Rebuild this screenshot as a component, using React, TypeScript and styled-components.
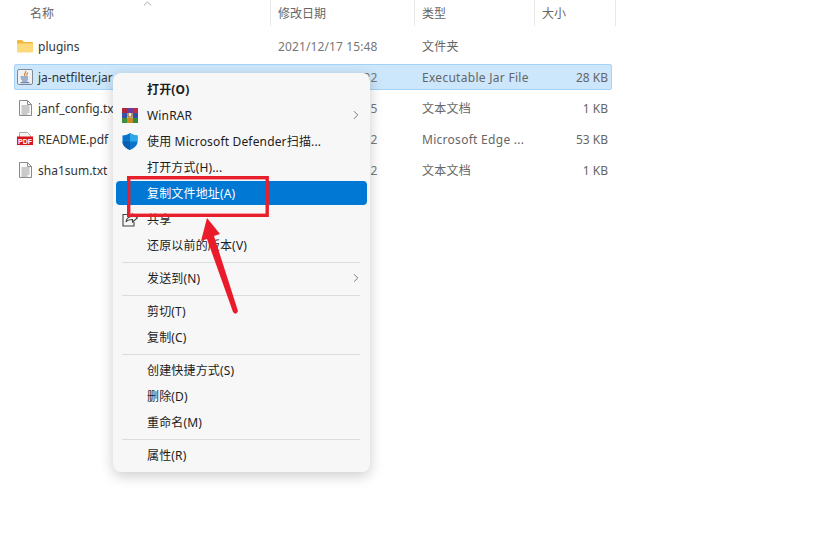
import styled, { createGlobalStyle } from "styled-components";
import { ChevronRight, ChevronUp } from "lucide-react";

const GlobalStyle = createGlobalStyle`
  html, body {
    margin: 0;
    padding: 0;
    background: #fff;
    font-family: "Noto Sans", "Noto Sans CJK SC", sans-serif;
    font-size: 12px;
  }
`;

const Page = styled.div`
  position: relative;
  width: 813px;
  height: 542px;
  overflow: hidden;
  background: #fff;
`;

const Explorer = styled.div`
  display: flex;
  flex-direction: column;
  width: 616px;
`;

const Header = styled.div`
  position: relative;
  display: grid;
  grid-template-columns: 257px 144px 120px 81px;
  height: 26px;
  padding-left: 14px;
  margin-bottom: 7px;
`;

const SortCaret = styled.span`
  position: absolute;
  left: 141px;
  top: -3px;
  color: #777;
  line-height: 0;
`;

const HeaderCell = styled.div<{ $pad: number }>`
  display: flex;
  align-items: center;
  padding-left: ${(p) => p.$pad}px;
  color: #666;
  border-right: 1px solid #e8e8e8;
`;

const Rows = styled.div`
  display: flex;
  flex-direction: column;
  gap: 5px;
`;

const Row = styled.div<{ $selected?: boolean }>`
  display: grid;
  grid-template-columns: 256px 144px 120px 73px;
  align-items: center;
  box-sizing: border-box;
  width: 598px;
  height: 26px;
  margin-left: 14px;
  border: 1px solid ${(p) => (p.$selected ? "#a5d3f7" : "transparent")};
  background: ${(p) => (p.$selected ? "#cce6fb" : "transparent")};
  border-radius: 2px;
`;

const NameCell = styled.div`
  display: flex;
  align-items: center;
  gap: 5px;
  padding-left: 2px;
  color: #333;
  white-space: nowrap;
`;

const FileIcon = styled.span`
  display: flex;
  justify-content: center;
  width: 16px;
  flex: none;
`;

const DateCell = styled.div`
  padding-left: 7px;
  color: #777;
  letter-spacing: 0.12px;
`;

const TypeCell = styled.div`
  padding-left: 7px;
  color: #666;
  white-space: nowrap;
  letter-spacing: 0.28px;
`;

const SizeCell = styled.div`
  text-align: right;
  color: #666;
`;

const Menu = styled.div`
  position: absolute;
  left: 113px;
  top: 73px;
  display: flex;
  flex-direction: column;
  box-sizing: border-box;
  width: 257px;
  height: 399px;
  padding-top: 3px;
  background: #f7f7f7;
  border-radius: 8px;
  box-shadow: 0 4px 14px rgba(0, 0, 0, 0.2);
`;

const Item = styled.div<{ $active?: boolean; $bold?: boolean }>`
  display: flex;
  align-items: center;
  height: 24px;
  flex: none;
  margin: 1px 3px;
  padding: 0 6px;
  border-radius: 4px;
  color: ${(p) => (p.$active ? "#fff" : "#1c1c1c")};
  background: ${(p) => (p.$active ? "#0078d4" : "transparent")};
  font-weight: ${(p) => (p.$bold ? 700 : 400)};
  letter-spacing: 0.16px;
`;

const IconSlot = styled.span`
  display: flex;
  align-items: center;
  justify-content: flex-start;
  width: 25px;
  flex: none;
`;

const Arrow = styled.span`
  display: flex;
  margin-left: auto;
  margin-right: -2px;
  color: #444;
`;

const Separator = styled.div`
  height: 1px;
  flex: none;
  margin: 4px 10px 2px 9px;
  background: #dcdcdc;
`;

const Annotation = styled.svg`
  position: absolute;
  left: 0;
  top: 0;
  pointer-events: none;
`;

const Folder = () => (
  <svg width="16" height="14" viewBox="0 0 16 14">
    <path d="M0 2 a1 1 0 0 1 1-1 h4 l2 2 h8 a1 1 0 0 1 1 1 v2 H0z" fill="#f0b93a" />
    <path d="M0 4.5 h16 v8 a1 1 0 0 1-1 1 H1 a1 1 0 0 1-1-1z" fill="#fcd97c" />
  </svg>
);

const JarFile = () => (
  <svg width="16" height="16" viewBox="0 0 16 16">
    <rect x="0.5" y="0.5" width="15" height="15" rx="1.5" fill="#f1f1f1" stroke="#7d8a99" />
    <path d="M8.5 2 c1.5 1.5-2.5 2.5-.5 5 M10.5 3.5 c.5 1-1.5 1.5-.5 3" fill="none" stroke="#d9762b" strokeWidth="1.1" />
    <path d="M3.5 8 h7.5 M4 10 h7 M5 12 h5.5 M3.5 13.8 h9" stroke="#4a6fa5" strokeWidth="1.1" />
  </svg>
);

const TextFile = () => (
  <svg width="13" height="16" viewBox="0 0 13 16">
    <path d="M0.5 0.5 h8 l4 4 v11 h-12z" fill="#fafafa" stroke="#8a8a8a" />
    <path d="M8.5 0.5 v4 h4" fill="none" stroke="#8a8a8a" />
    <path d="M2.5 6 h8 M2.5 8 h8 M2.5 10 h8 M2.5 12 h8 M2.5 14 h6" stroke="#9a9a9a" />
  </svg>
);

const PdfFile = () => (
  <svg width="16" height="15" viewBox="0 0 16 15">
    <path d="M2.5 0.5 h8 l3 3 v3 h-11z" fill="#f5f5f5" stroke="#aaa" />
    <rect x="0" y="4.5" width="16" height="8.5" fill="#d9141b" />
    <rect x="2.5" y="13" width="11" height="2" fill="#eee" />
    <text x="8" y="11.5" textAnchor="middle" fontSize="7" fontWeight="700" fontFamily="Liberation Sans, sans-serif" fill="#fff">
      PDF
    </text>
  </svg>
);

const WinRar = () => (
  <svg width="16" height="15" viewBox="0 0 16 15">
    <rect x="0" y="0" width="5" height="5" fill="#b0263c" />
    <rect x="5" y="0" width="6" height="5" fill="#6a3d98" />
    <rect x="11" y="0" width="5" height="5" fill="#c2284a" />
    <rect x="0" y="5" width="5" height="5" fill="#3553a8" />
    <rect x="5" y="5" width="6" height="5" fill="#f3ead2" />
    <rect x="11" y="5" width="5" height="5" fill="#2f4fa8" />
    <rect x="0" y="10" width="5" height="5" fill="#3f8f3a" />
    <rect x="5" y="10" width="6" height="5" fill="#c98a23" />
    <rect x="11" y="10" width="5" height="5" fill="#2f8a3c" />
    <path d="M6 5 v4 h4 v-4" fill="none" stroke="#8a5a1a" strokeWidth="1.2" />
  </svg>
);

const Shield = () => (
  <svg width="16" height="17" viewBox="0 0 16 17">
    <path d="M8 0 c2 1.6 4.5 2.2 7.5 2.4 v6 c0 4-3.2 6.6-7.5 8.6 c-4.3-2-7.5-4.6-7.5-8.6 v-6 c3-.2 5.5-.8 7.5-2.4z" fill="#0a74cc" />
    <path d="M8 0 c2 1.6 4.5 2.2 7.5 2.4 v6 H8z" fill="#2fa7e8" />
    <path d="M.5 8.4 H8 V17 c-4.3-2-7.5-4.6-7.5-8.6z" fill="#0a5fb0" />
  </svg>
);

const Share = () => (
  <svg width="16" height="15" viewBox="0 0 16 15">
    <path d="M5 2.5 H1 v11.5 h11 v-4" fill="none" stroke="#444" strokeWidth="1.1" />
    <path d="M4 10 c.5-3.5 3-5.5 6.5-5.5 V2 l5 4-5 4 V7.5 c-2.5 0-5 .5-6.5 2.5z" fill="none" stroke="#444" strokeWidth="1.1" />
  </svg>
);

const files = [
  { icon: <Folder />, name: "plugins", date: "2021/12/17 15:48", type: "文件夹", size: "" },
  { icon: <JarFile />, name: "ja-netfilter.jar", date: "2021/12/17 15:32", type: "Executable Jar File", size: "28 KB", selected: true },
  { icon: <TextFile />, name: "janf_config.txt", date: "2021/12/17 15:35", type: "文本文档", size: "1 KB" },
  { icon: <PdfFile />, name: "README.pdf", date: "2021/12/17 15:32", type: "Microsoft Edge ...", size: "53 KB" },
  { icon: <TextFile />, name: "sha1sum.txt", date: "2021/12/17 15:32", type: "文本文档", size: "1 KB" },
];

export default function App() {
  return (
    <Page>
      <GlobalStyle />
      <Explorer>
        <Header>
          <SortCaret>
            <ChevronUp size={13} strokeWidth={1.2} />
          </SortCaret>
          <HeaderCell $pad={16}>名称</HeaderCell>
          <HeaderCell $pad={7}>修改日期</HeaderCell>
          <HeaderCell $pad={7}>类型</HeaderCell>
          <HeaderCell $pad={7}>大小</HeaderCell>
        </Header>
        <Rows>
          {files.map((f) => (
            <Row key={f.name} $selected={f.selected}>
              <NameCell>
                <FileIcon>{f.icon}</FileIcon>
                {f.name}
              </NameCell>
              <DateCell>{f.date}</DateCell>
              <TypeCell>{f.type}</TypeCell>
              <SizeCell>{f.size}</SizeCell>
            </Row>
          ))}
        </Rows>
      </Explorer>

      <Menu>
        <Item $bold>
          <IconSlot />
          打开(O)
        </Item>
        <Item>
          <IconSlot>
            <WinRar />
          </IconSlot>
          WinRAR
          <Arrow>
            <ChevronRight size={14} strokeWidth={1.2} />
          </Arrow>
        </Item>
        <Item>
          <IconSlot>
            <Shield />
          </IconSlot>
          使用 Microsoft Defender扫描...
        </Item>
        <Item>
          <IconSlot />
          打开方式(H)...
        </Item>
        <Item $active>
          <IconSlot />
          复制文件地址(A)
        </Item>
        <Item>
          <IconSlot>
            <Share />
          </IconSlot>
          共享
        </Item>
        <Item>
          <IconSlot />
          还原以前的版本(V)
        </Item>
        <Separator />
        <Item>
          <IconSlot />
          发送到(N)
          <Arrow>
            <ChevronRight size={14} strokeWidth={1.2} />
          </Arrow>
        </Item>
        <Separator />
        <Item>
          <IconSlot />
          剪切(T)
        </Item>
        <Item>
          <IconSlot />
          复制(C)
        </Item>
        <Separator />
        <Item>
          <IconSlot />
          创建快捷方式(S)
        </Item>
        <Item>
          <IconSlot />
          删除(D)
        </Item>
        <Item>
          <IconSlot />
          重命名(M)
        </Item>
        <Separator />
        <Item>
          <IconSlot />
          属性(R)
        </Item>
      </Menu>

      <Annotation width="813" height="542" viewBox="0 0 813 542">
        <rect x="128.7" y="177.7" width="138.5" height="37.6" fill="none" stroke="#e8202c" strokeWidth="3.4" />
        <path d="M207 218 L220 234 L214 236 L238 311 Q236 316 233 312 L207 239 L201 241z" fill="#ea1c2c" />
      </Annotation>
    </Page>
  );
}
